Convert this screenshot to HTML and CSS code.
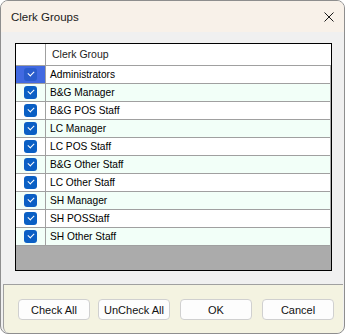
FILE: index.html
```html
<!DOCTYPE html>
<html lang="en">
    <head>
        <meta charset="UTF-8">
        <meta name="viewport" content="width=device-width,initial-scale=1.0">
        <title>Clerk Groups</title>
        <link rel="stylesheet" href="styles.css">
    </head>
    <body>
        <div class="window">
            <div class="titlebar">
                <span class="title">Clerk Groups</span>
                <svg class="close" width="10" height="10" viewBox="0 0 10 10">
                    <path d="M0.5 0.5 L9.5 9.5 M9.5 0.5 L0.5 9.5" stroke="#1a1a1a" stroke-width="1" fill="none"/>
                </svg>
            </div>
            <div class="client">
                <div class="grid">
                    <div class="row head">
                        <div class="sel"></div>
                        <div class="cell">Clerk Group</div>
                    </div>
                    <div class="row active">
                        <div class="sel"><span class="check"></span></div>
                        <div class="cell">Administrators</div>
                    </div>
                    <div class="row">
                        <div class="sel"><span class="check"></span></div>
                        <div class="cell">B&amp;G Manager</div>
                    </div>
                    <div class="row">
                        <div class="sel"><span class="check"></span></div>
                        <div class="cell">B&amp;G POS Staff</div>
                    </div>
                    <div class="row">
                        <div class="sel"><span class="check"></span></div>
                        <div class="cell">LC Manager</div>
                    </div>
                    <div class="row">
                        <div class="sel"><span class="check"></span></div>
                        <div class="cell">LC POS Staff</div>
                    </div>
                    <div class="row">
                        <div class="sel"><span class="check"></span></div>
                        <div class="cell">B&amp;G Other Staff</div>
                    </div>
                    <div class="row">
                        <div class="sel"><span class="check"></span></div>
                        <div class="cell">LC Other Staff</div>
                    </div>
                    <div class="row">
                        <div class="sel"><span class="check"></span></div>
                        <div class="cell">SH Manager</div>
                    </div>
                    <div class="row">
                        <div class="sel"><span class="check"></span></div>
                        <div class="cell">SH POSStaff</div>
                    </div>
                    <div class="row">
                        <div class="sel"><span class="check"></span></div>
                        <div class="cell">SH Other Staff</div>
                    </div>
                    <div class="empty"></div>
                </div>
            </div>
            <div class="footer">
                <button class="btn">Check All</button>
                <button class="btn">UnCheck All</button>
                <button class="btn">OK</button>
                <button class="btn">Cancel</button>
            </div>
        </div>
    </body>
</html>
```
FILE: styles.css
```css
*{
    margin: 0;
    padding: 0;
    box-sizing: border-box;
}
body{
    background-color: #fff;
    font-family: "Liberation Sans", Arial, sans-serif;
    font-size: 10px;
    color: #000;
}
.window{
    width: 345px;
    height: 334px;
    border: 1px solid #8e8e8e;
    border-radius: 8px;
    overflow: hidden;
    display: flex;
    flex-direction: column;
    background-color: #f0f0f0;
}
.titlebar{
    height: 31px;
    flex-shrink: 0;
    display: flex;
    align-items: center;
    justify-content: space-between;
    padding: 0 10px 0 10px;
    background-color: #f8f1e9;
}
.title{
    font-size: 11.5px;
    color: #1a1a1a;
}
.client{
    padding: 11px 12px 0 14px;
}
.grid{
    height: 228px;
    border: 1px solid #000;
    background-color: #ababab;
    display: flex;
    flex-direction: column;
}
.row{
    height: 18px;
    display: flex;
    background-color: #fff;
    border-bottom: 1px solid #a0a0a0;
    margin-right: 1px;
}
.row:nth-child(odd){
    background-color: #f2fff8;
}
.row.head{
    height: 22px;
    background-color: #fff;
    margin-right: 0;
}
.sel{
    width: 30px;
    flex-shrink: 0;
    border-right: 1px solid #a0a0a0;
    display: flex;
    align-items: center;
    justify-content: center;
}
.row.active .sel{
    background-color: #4169e1;
}
.cell{
    padding-left: 4px;
    line-height: 17px;
    font-size: 10.2px;
}
.head .cell{
    line-height: 21px;
    padding-left: 6px;
    font-size: 10.5px;
    color: #222;
}
.check{
    width: 13px;
    height: 13px;
    border-radius: 3px;
    background-color: #0a5fc4;
    position: relative;
}
.row.active .check{
    background-color: #2a5ccc;
}
.check::after{
    content: "";
    position: absolute;
    left: 4px;
    top: 3px;
    width: 5px;
    height: 3px;
    border-left: 1px solid #fff;
    border-bottom: 1px solid #fff;
    transform: rotate(-45deg);
}
.empty{
    flex-grow: 1;
}
.footer{
    flex-grow: 1;
    margin-top: 13px;
    margin-left: 2px;
    margin-right: 1px;
    border-top: 1px solid #a0a0a0;
    border-left: 1px solid #a0a0a0;
    border-radius: 0 0 6px 6px;
    background-color: #f4f3e1;
    display: flex;
    gap: 8px;
    padding: 14px 0 0 14px;
}
.btn{
    width: 72px;
    height: 21px;
    font-family: "Liberation Sans", Arial, sans-serif;
    font-size: 11px;
    color: #111;
    background-color: #fdfdfd;
    border: 1px solid #d0d0d0;
    border-radius: 4px;
}
.btn:nth-child(3){
    margin-left: 2px;
}
.btn:nth-child(4){
    margin-left: 2px;
}
```
